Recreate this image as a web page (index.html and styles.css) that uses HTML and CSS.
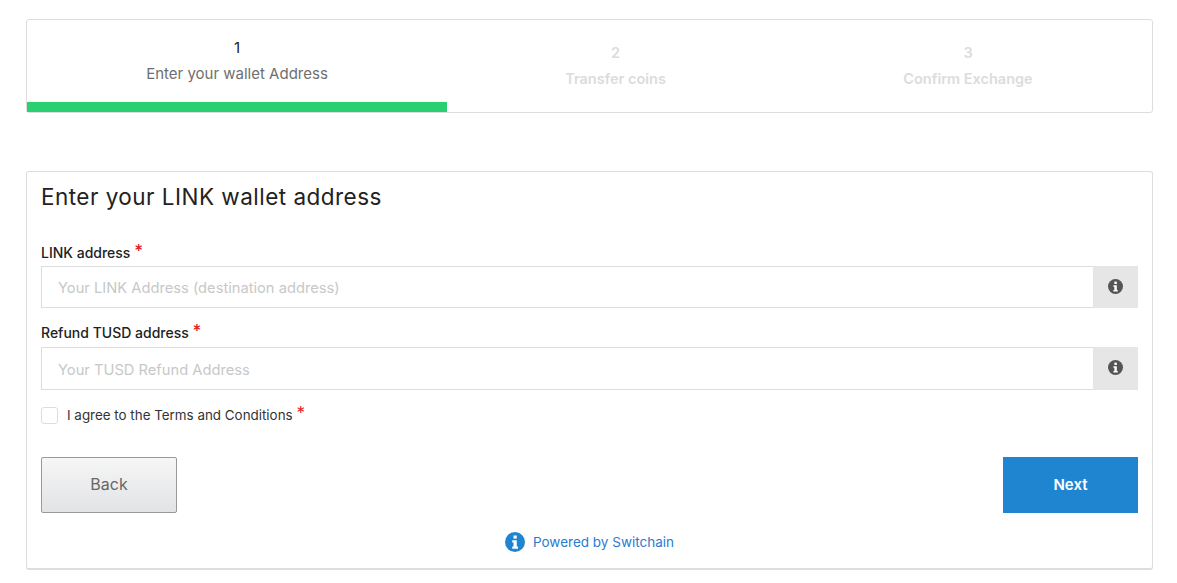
FILE: index.html
```html
<!DOCTYPE html>
<html lang="en">
<head>
    <meta charset="UTF-8">
    <meta name="viewport" content="width=device-width, initial-scale=1.0">
    <title>Exchange - Enter wallet address</title>
    <link rel="stylesheet" href="styles.css">
</head>
<body>
    <div class="steps-card">
        <div class="step step-active">
            <div class="step-num">1</div>
            <div class="step-label">Enter your wallet Address</div>
        </div>
        <div class="step">
            <div class="step-num">2</div>
            <div class="step-label">Transfer coins</div>
        </div>
        <div class="step">
            <div class="step-num">3</div>
            <div class="step-label">Confirm Exchange</div>
        </div>
    </div>

    <form class="form-card">
        <h2>Enter your LINK wallet address</h2>
        <div class="form-group group-first">
            <label for="link-address">LINK address <span class="req">*</span></label>
            <div class="input-row">
                <input type="text" id="link-address" placeholder="Your LINK Address (destination address)">
                <span class="input-addon">
                    <svg width="15" height="15" viewBox="0 0 16 16"><circle cx="8" cy="8" r="8" fill="#555"/><rect x="6.8" y="2.8" width="2.6" height="2.5" fill="#fff"/><path d="M5.8 6.6h3.6v5h1v1.7H5.8v-1.7h1v-3.3h-1z" fill="#fff"/></svg>
                </span>
            </div>
        </div>
        <div class="form-group group-second">
            <label for="refund-address">Refund TUSD address <span class="req">*</span></label>
            <div class="input-row">
                <input type="text" id="refund-address" placeholder="Your TUSD Refund Address">
                <span class="input-addon">
                    <svg width="15" height="15" viewBox="0 0 16 16"><circle cx="8" cy="8" r="8" fill="#555"/><rect x="6.8" y="2.8" width="2.6" height="2.5" fill="#fff"/><path d="M5.8 6.6h3.6v5h1v1.7H5.8v-1.7h1v-3.3h-1z" fill="#fff"/></svg>
                </span>
            </div>
        </div>
        <div class="terms">
            <span class="checkbox"></span>
            <span class="terms-text">I agree to the Terms and Conditions <span class="req">*</span></span>
        </div>
        <div class="buttons">
            <button type="button" class="back-btn">Back</button>
            <button type="button" class="next-btn">Next</button>
        </div>
        <div class="powered">
            <svg width="20" height="20" viewBox="0 0 16 16"><circle cx="8" cy="8" r="8" fill="#2085d0"/><rect x="6.8" y="2.8" width="2.6" height="2.5" fill="#fff"/><path d="M5.8 6.6h3.6v5h1v1.7H5.8v-1.7h1v-3.3h-1z" fill="#fff"/></svg>
            <span>Powered by Switchain</span>
        </div>
    </form>
</body>
</html>
```

FILE: styles.css
```css
* {
    box-sizing: border-box;
}
body {
    font-family: Inter, Roboto, Arial, sans-serif;
    background-color: #fff;
    color: #222;
    margin: 0;
    padding: 19px 24px 0 26px;
}
.steps-card {
    display: grid;
    grid-template-columns: 420px 337px 1fr;
    height: 94px;
    background-color: #fff;
    border: 1px solid #ddd;
    border-radius: 3px;
}
.step {
    text-align: center;
    padding-top: 23px;
    color: #dcdcdc;
    font-size: 14.5px;
    font-weight: 600;
}
.step-num {
    line-height: 20px;
    margin-bottom: 6px;
}
.step-label {
    line-height: 20px;
}
.step-active {
    padding-top: 18px;
    height: 92px;
    border-bottom: 10px solid #2ad06f;
    color: #6f6f6f;
    font-size: 15px;
    font-weight: 400;
}
.step-active .step-num {
    color: #222;
}
.form-card {
    margin-top: 58px;
    height: 399px;
    padding: 0 14px;
    border: 1px solid #ddd;
    border-bottom-width: 2px;
    border-radius: 3px;
}
.form-card h2 {
    margin: 10px 0 0;
    font-size: 22.5px;
    font-weight: 400;
    line-height: 30px;
    letter-spacing: 0.47px;
    color: #222;
}
.form-group {
    margin-top: 14px;
}
.group-first {
    margin-top: 29px;
}
.form-group label {
    display: block;
    height: 25px;
    line-height: 24px;
    font-size: 14px;
    font-weight: 500;
}
.group-second label {
    line-height: 22px;
}
.req {
    color: #e0202a;
    font-size: 17px;
    line-height: 14px;
    vertical-align: 1px;
}
.input-row {
    display: flex;
    height: 42px;
}
.group-second .input-row {
    height: 43px;
}
.input-row input {
    flex: 1;
    min-width: 0;
    padding: 2px 16px 0;
    border: 1px solid #ddd;
    border-right: none;
    outline: none;
    font-family: inherit;
    font-size: 14.7px;
    color: #222;
}
.input-row input::placeholder {
    color: #c8c8c8;
    opacity: 1;
}
.input-addon {
    width: 45px;
    padding-bottom: 2px;
    display: flex;
    align-items: center;
    justify-content: center;
    background-color: #e6e6e6;
}
.terms {
    display: flex;
    align-items: center;
    gap: 9px;
    margin-top: 15px;
    height: 20px;
    font-size: 13.4px;
}
.checkbox {
    width: 17px;
    height: 17px;
    border: 1px solid #ddd;
    border-radius: 3px;
}
.terms-text {
    color: #333;
    margin-top: -2px;
}
.buttons {
    display: flex;
    justify-content: space-between;
    margin-top: 32px;
}
.buttons button {
    height: 56px;
    padding-bottom: 3px;
    font-family: inherit;
    font-size: 16px;
    cursor: pointer;
}
.back-btn {
    width: 136px;
    border: 1px solid #999;
    border-radius: 2px;
    background: linear-gradient(#f6f6f6, #e2e3e5);
    color: #666;
}
.buttons .next-btn {
    width: 135px;
    border: none;
    background-color: #2085d0;
    color: #fff;
    font-size: 15px;
    font-weight: 600;
}
.powered {
    display: flex;
    align-items: center;
    justify-content: center;
    gap: 8px;
    margin-top: 19px;
    font-size: 13.5px;
    color: #2a7bd0;
}
```
